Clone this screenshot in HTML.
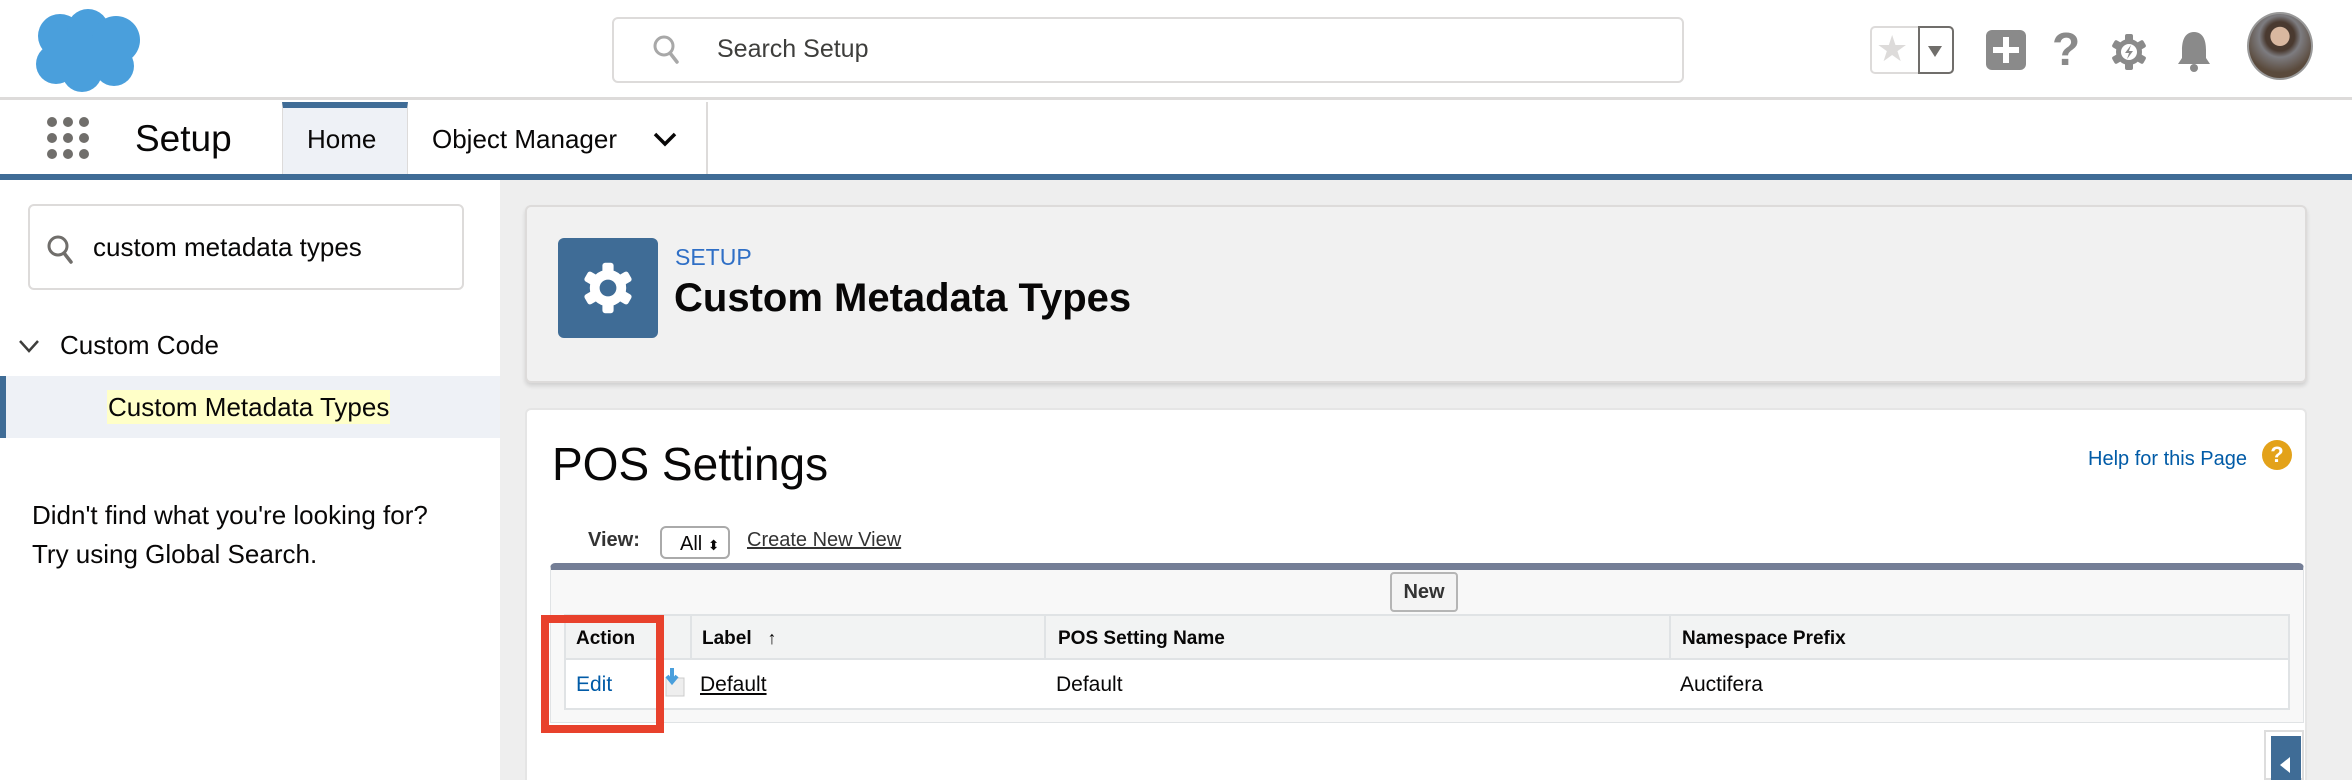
<!DOCTYPE html>
<html style="width:2352px;height:780px;overflow:hidden"><head><meta charset="utf-8"><style>
*{box-sizing:border-box;margin:0;padding:0}
body{width:2352px;height:780px;overflow:hidden;background:#fff;font-family:"Liberation Sans",Arial,sans-serif;position:relative;color:#080707}
.a{position:absolute}
</style></head><body>
<!-- header -->
<div class="a" style="left:0;top:0;width:2352px;height:100px;background:#fff;border-bottom:3px solid #dddbda"></div>
<svg class="a" style="left:30px;top:8px" width="118" height="84" viewBox="0 0 118 84">
<g fill="#4a9fdc"><circle cx="30" cy="28" r="22"/><circle cx="58" cy="22" r="21"/><circle cx="86" cy="32" r="24"/><circle cx="26" cy="56" r="20"/><circle cx="52" cy="64" r="20"/><circle cx="84" cy="58" r="20"/><rect x="20" y="30" width="80" height="35"/></g></svg>
<div class="a" style="left:612px;top:17px;width:1072px;height:66px;border:2px solid #dddbda;border-radius:6px"></div>
<svg class="a" style="left:652px;top:34px" width="30" height="32" viewBox="0 0 30 32"><circle cx="12" cy="12" r="9" fill="none" stroke="#a8a8a8" stroke-width="3"/><line x1="18" y1="19" x2="25" y2="28" stroke="#a8a8a8" stroke-width="3.5" stroke-linecap="round"/></svg>
<div class="a" style="left:717px;top:35px;font-size:25px;color:#3e3e3c">Search Setup</div>
<div class="a" style="left:1870px;top:26px;width:84px;height:48px;border:2px solid #dddbda;border-radius:5px;background:#fff"></div>
<div class="a" style="left:1918px;top:26px;width:36px;height:48px;border:2px solid #706e6b;border-radius:0 5px 5px 0"></div>
<div class="a" style="left:1876px;top:28px;font-size:36px;color:#dddbda">★</div>
<svg class="a" style="left:1926px;top:44px" width="18" height="14"><polygon points="2,2 16,2 9,13" fill="#706e6b"/></svg>
<div class="a" style="left:1986px;top:30px;width:40px;height:40px;background:#8a8a8a;border-radius:6px"></div>
<div class="a" style="left:2003px;top:37px;width:6px;height:26px;background:#fff"></div>
<div class="a" style="left:1993px;top:47px;width:26px;height:6px;background:#fff"></div>
<div class="a" style="left:2052px;top:22px;font-size:46px;font-weight:bold;color:#8a8a8a">?</div>
<svg class="a" style="left:2110px;top:32px" width="38" height="40" viewBox="0 0 38 40"><g fill="#8a8a8a"><circle cx="19" cy="20" r="13"/><rect x="15" y="2" width="8" height="36" rx="2"/><rect x="15" y="2" width="8" height="36" rx="2" transform="rotate(60 19 20)"/><rect x="15" y="2" width="8" height="36" rx="2" transform="rotate(-60 19 20)"/></g><circle cx="19" cy="20" r="8" fill="#fff"/><path d="M21 13 L15 21 L19 21 L17 27 L23 19 L19 19 Z" fill="#8a8a8a"/></svg>
<svg class="a" style="left:2174px;top:30px" width="40" height="44" viewBox="0 0 40 44"><path d="M20 2 C10 2 8 12 8 20 L8 28 L4 34 L36 34 L32 28 L32 20 C32 12 30 2 20 2 Z" fill="#8a8a8a"/><circle cx="20" cy="38" r="4" fill="#8a8a8a"/></svg>
<div class="a" style="left:2247px;top:12px;width:66px;height:68px;border-radius:50%;background:radial-gradient(circle at 50% 35%,#d9b8a0 0 18%,#4a3a30 19% 28%,#7d7c80 40%,#5a4a3c 70%);border:2px solid #999"></div>
<!-- nav -->
<div class="a" style="left:0;top:102px;width:2352px;height:72px;background:#fff"></div>
<div class="a" style="left:0;top:174px;width:2352px;height:6px;background:#3f6c96"></div>
<svg class="a" style="left:46px;top:116px" width="46" height="46"><g fill="#706e6b"><circle cx="6" cy="6" r="5"/><circle cx="22" cy="6" r="5"/><circle cx="38" cy="6" r="5"/><circle cx="6" cy="22" r="5"/><circle cx="22" cy="22" r="5"/><circle cx="38" cy="22" r="5"/><circle cx="6" cy="38" r="5"/><circle cx="22" cy="38" r="5"/><circle cx="38" cy="38" r="5"/></g></svg>
<div class="a" style="left:135px;top:118px;font-size:37px;color:#080707">Setup</div>
<div class="a" style="left:282px;top:102px;width:126px;height:72px;background:#eef1f6;border-top:6px solid #3f6c96;border-left:1px solid #dddbda;border-right:1px solid #dddbda"></div>
<div class="a" style="left:307px;top:124px;font-size:26px">Home</div>
<div class="a" style="left:432px;top:124px;font-size:26px">Object Manager</div>
<svg class="a" style="left:652px;top:130px" width="26" height="18"><polyline points="3,4 13,14 23,4" fill="none" stroke="#080707" stroke-width="3.5"/></svg>
<div class="a" style="left:706px;top:102px;width:2px;height:72px;background:#dddbda"></div>
<!-- sidebar -->
<div class="a" style="left:0;top:180px;width:500px;height:600px;background:#fff"></div>
<div class="a" style="left:28px;top:204px;width:436px;height:86px;border:2px solid #dddbda;border-radius:6px"></div>
<svg class="a" style="left:46px;top:234px" width="30" height="32" viewBox="0 0 30 32"><circle cx="12" cy="12" r="9" fill="none" stroke="#706e6b" stroke-width="3"/><line x1="18" y1="19" x2="25" y2="28" stroke="#706e6b" stroke-width="3.5" stroke-linecap="round"/></svg>
<div class="a" style="left:93px;top:232px;font-size:26px">custom metadata types</div>
<svg class="a" style="left:18px;top:338px" width="22" height="16"><polyline points="2,3 11,13 20,3" fill="none" stroke="#3e3e3c" stroke-width="2.5"/></svg>
<div class="a" style="left:60px;top:330px;font-size:26px">Custom Code</div>
<div class="a" style="left:0;top:376px;width:500px;height:62px;background:#eef1f6;border-left:6px solid #3f6c96"></div>
<div class="a" style="left:107px;top:390px;height:34px;padding:3px 1px;background:#ffffc8;font-size:26px;line-height:28px">Custom Metadata Types</div>
<div class="a" style="left:32px;top:496px;font-size:26px;line-height:39px">Didn't find what you're looking for?<br>Try using Global Search.</div>
<!-- main -->
<div class="a" style="left:500px;top:180px;width:1852px;height:600px;background:#eeeeee"></div>
<div class="a" style="left:525px;top:205px;width:1782px;height:178px;background:#f1f1f1;border:2px solid #dddbda;border-radius:6px;box-shadow:0 3px 4px rgba(0,0,0,.12)"></div>
<div class="a" style="left:558px;top:238px;width:100px;height:100px;background:#3f6c96;border-radius:6px"></div>
<svg class="a" style="left:580px;top:260px" width="56" height="56" viewBox="0 0 38 40"><g fill="#fff"><circle cx="19" cy="20" r="13"/><rect x="15" y="2" width="8" height="36" rx="2"/><rect x="15" y="2" width="8" height="36" rx="2" transform="rotate(60 19 20)"/><rect x="15" y="2" width="8" height="36" rx="2" transform="rotate(-60 19 20)"/></g><circle cx="19" cy="20" r="6" fill="#3f6c96"/></svg>
<div class="a" style="left:675px;top:244px;font-size:23px;color:#2f6fc6">SETUP</div>
<div class="a" style="left:674px;top:276px;font-size:40px;font-weight:bold">Custom Metadata Types</div>
<div class="a" style="left:525px;top:408px;width:1782px;height:372px;background:#fff;border:2px solid #e5e5e5;border-bottom:none;border-radius:6px 6px 0 0"></div>
<div class="a" style="left:552px;top:437px;font-size:46px">POS Settings</div>
<div class="a" style="left:2088px;top:448px;font-size:20px;color:#015ba7">Help for this Page</div>
<div class="a" style="left:2262px;top:440px;width:30px;height:30px;border-radius:50%;background:#e3a21a;color:#fff;font-weight:bold;font-size:22px;text-align:center;line-height:30px">?</div>
<div class="a" style="left:588px;top:529px;font-size:20px;font-weight:bold;color:#333">View:</div>
<div class="a" style="left:660px;top:526px;width:70px;height:33px;border:2px solid #aaa;border-radius:6px;font-size:20px;padding:5px 0 0 18px">All <span style="font-size:14px">⬍</span></div>
<div class="a" style="left:747px;top:529px;font-size:20px;text-decoration:underline;color:#333">Create New View</div>
<div class="a" style="left:550px;top:563px;width:1754px;height:160px;background:#f8f8f8;border:1px solid #e0e3e5;border-top:7px solid #747e96;border-radius:5px 5px 0 0"></div>
<div class="a" style="left:1390px;top:572px;width:68px;height:40px;background:#f4f4f4;border:2px solid #b5b5b5;border-radius:4px;font-size:20px;font-weight:bold;text-align:center;line-height:36px;color:#333">New</div>
<div class="a" style="left:564px;top:614px;width:1726px;height:96px;background:#fff;border:2px solid #e0e3e5"></div>
<div class="a" style="left:566px;top:616px;width:1722px;height:44px;background:#f2f3f3;border-bottom:2px solid #e0e3e5"></div>
<div class="a" style="left:690px;top:616px;width:2px;height:44px;background:#e0e3e5"></div>
<div class="a" style="left:1044px;top:616px;width:2px;height:44px;background:#e0e3e5"></div>
<div class="a" style="left:1669px;top:616px;width:2px;height:44px;background:#e0e3e5"></div>
<div class="a" style="left:576px;top:628px;font-size:19px;font-weight:bold">Action</div>
<div class="a" style="left:702px;top:628px;font-size:19px;font-weight:bold">Label &nbsp;&nbsp;<span style="font-size:18px">↑</span></div>
<div class="a" style="left:1058px;top:628px;font-size:19px;font-weight:bold">POS Setting Name</div>
<div class="a" style="left:1682px;top:628px;font-size:19px;font-weight:bold">Namespace Prefix</div>
<div class="a" style="left:576px;top:673px;font-size:21px;color:#015ba7">Edit</div>
<svg class="a" style="left:662px;top:666px" width="24" height="32"><rect x="4" y="12" width="18" height="18" fill="#eee" stroke="#ccc"/><path d="M10 2 V14 M5 10 L10 16 L15 10" stroke="#4a9fdc" stroke-width="4" fill="none"/></svg>
<div class="a" style="left:700px;top:673px;font-size:21px;text-decoration:underline">Default</div>
<div class="a" style="left:1056px;top:673px;font-size:21px">Default</div>
<div class="a" style="left:1680px;top:673px;font-size:21px">Auctifera</div>
<div class="a" style="left:541px;top:615px;width:123px;height:118px;border:8px solid #e8412c"></div>
<div class="a" style="left:2264px;top:730px;width:40px;height:50px;background:#fff;border:2px solid #ddd"></div>
<div class="a" style="left:2271px;top:736px;width:30px;height:44px;background:#3f6c96"></div>
<svg class="a" style="left:2278px;top:756px" width="14" height="18"><polygon points="12,1 12,17 2,9" fill="#fff"/></svg>
</body></html>
